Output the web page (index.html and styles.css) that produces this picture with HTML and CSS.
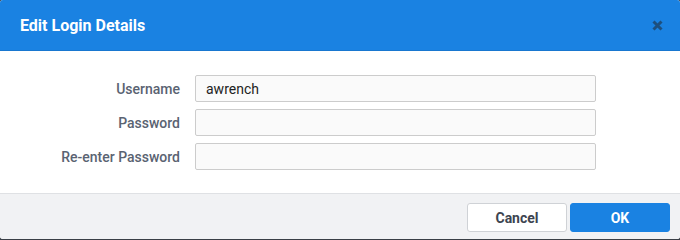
FILE: index.html
```html
<!DOCTYPE html>
<html>
<head>
<meta charset="utf-8">
<link rel="stylesheet" href="styles.css">
</head>
<body>
<div class="dialog">
  <div class="header">
    <span class="title">Edit Login Details</span>
    <span class="close" aria-label="Close">
      <svg width="11" height="11" viewBox="0 0 11 11"><path d="M1.5 1.5 L9.5 9.5 M9.5 1.5 L1.5 9.5" stroke="currentColor" stroke-width="3" stroke-linecap="butt"/></svg>
    </span>
  </div>
  <div class="body">
    <div class="form">
      <label class="label">Username</label>
      <input class="input" type="text" value="awrench">
      <label class="label">Password</label>
      <input class="input" type="password" value="">
      <label class="label">Re-enter Password</label>
      <input class="input" type="password" value="">
    </div>
  </div>
  <div class="footer">
    <button class="btn btn-cancel">Cancel</button>
    <button class="btn btn-ok">OK</button>
  </div>
</div>
</body>
</html>
```
FILE: styles.css
```css
html, body {
  margin: 0;
  padding: 0;
}
body {
  background: #3a3f46;
  font-family: Roboto, "Liberation Sans", sans-serif;
  width: 680px;
  height: 239px;
  overflow: hidden;
}
.dialog {
  width: 680px;
  height: 239px;
  background: #ffffff;
  border-radius: 3px;
  overflow: hidden;
  display: flex;
  flex-direction: column;
}
.header {
  height: 50px;
  background: #1a82e2;
  border-bottom: 1px solid #1877d0;
  display: flex;
  align-items: center;
  justify-content: space-between;
  padding: 0 17px 0 20px;
  box-sizing: content-box;
}
.title {
  color: #ffffff;
  font-weight: 700;
  font-size: 16px;
}
.close {
  color: #1d4f7e;
  display: flex;
}
.body {
  flex: 1;
  padding: 24px 0 0 0;
}
.form {
  display: grid;
  grid-template-columns: 180px 401px;
  column-gap: 15px;
  row-gap: 7px;
  align-items: center;
}
.label {
  text-align: right;
  color: #5a6372;
  font-size: 14px;
  font-weight: 500;
}
.input {
  height: 27px;
  box-sizing: border-box;
  border: 1px solid #cccccc;
  border-radius: 2px;
  background: #fafafa;
  font-family: Roboto, "Liberation Sans", sans-serif;
  font-size: 14px;
  color: #222222;
  padding: 0 10px;
  margin: 0;
  outline: none;
}
.footer {
  height: 46px;
  background: #f1f2f4;
  border-top: 1px solid #dfe1e4;
  display: flex;
  justify-content: flex-end;
  align-items: flex-start;
  gap: 3px;
  padding: 9px 10px 0 0;
  box-sizing: border-box;
}
.btn {
  width: 100px;
  height: 29px;
  border-radius: 3px;
  font-family: Roboto, "Liberation Sans", sans-serif;
  font-size: 14px;
  font-weight: 700;
  cursor: pointer;
  margin: 0;
}
.btn-cancel {
  background: #ffffff;
  border: 1px solid #cfd2d6;
  color: #3d4450;
}
.btn-ok {
  background: #1a82e2;
  border: 1px solid #1a82e2;
  color: #ffffff;
}
```
